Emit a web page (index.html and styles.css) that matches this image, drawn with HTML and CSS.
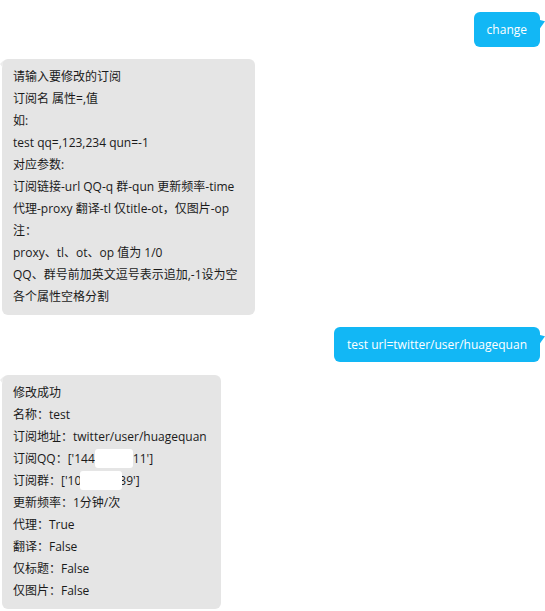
FILE: index.html
```html
<!DOCTYPE html>
<html lang="zh-CN">
<head>
<meta charset="utf-8">
<link rel="stylesheet" href="styles.css">
</head>
<body>
<div class="chat">
  <div class="row right">
    <div class="bubble me">change</div>
  </div>
  <div class="row left">
    <div class="bubble bot wide">
      <div class="line">请输入要修改的订阅</div>
      <div class="line">订阅名 属性=,值</div>
      <div class="line">如:</div>
      <div class="line">test qq=,123,234 qun=-1</div>
      <div class="line">对应参数:</div>
      <div class="line">订阅链接-url QQ-q 群-qun 更新频率-time</div>
      <div class="line">代理-proxy 翻译-tl 仅title-ot，仅图片-op</div>
      <div class="line">注：</div>
      <div class="line">proxy、tl、ot、op 值为 1/0</div>
      <div class="line">QQ、群号前加英文逗号表示追加,-1设为空</div>
      <div class="line">各个属性空格分割</div>
    </div>
  </div>
  <div class="row right">
    <div class="bubble me">test url=twitter/user/huagequan</div>
  </div>
  <div class="row left last">
    <div class="bubble bot">
      <div class="line">修改成功</div>
      <div class="line">名称：test</div>
      <div class="line">订阅地址：twitter/user/huagequan</div>
      <div class="line">订阅QQ：['144<span class="mask m1"></span>11']</div>
      <div class="line">订阅群：['10<span class="mask m2"></span>39']</div>
      <div class="line">更新频率：1分钟/次</div>
      <div class="line">代理：True</div>
      <div class="line">翻译：False</div>
      <div class="line">仅标题：False</div>
      <div class="line">仅图片：False</div>
    </div>
  </div>
</div>
</body>
</html>
```
FILE: styles.css
```css
html, body {
  margin: 0;
  padding: 0;
  background: #ffffff;
}
body {
  font-family: "Open Sans", "Noto Sans CJK SC", sans-serif;
  font-size: 12px;
  color: #1a1a1a;
}
.chat {
  display: flex;
  flex-direction: column;
  gap: 12px;
  padding: 12px 5px 0 2px;
}
.row {
  display: flex;
}
.row.right {
  justify-content: flex-end;
}
.row.left {
  justify-content: flex-start;
}
.row.last {
  margin-top: 1px;
}
.bubble {
  position: relative;
  border-radius: 6px;
  line-height: 22px;
}
.bubble.me {
  background: #12b7f5;
  color: #ffffff;
  padding: 7px 13px 6px 13px;
}
.bubble.me::after {
  content: "";
  position: absolute;
  right: -5px;
  top: 6px;
  border-left: 6px solid #12b7f5;
  border-top: 5px solid transparent;
  border-bottom: 5px solid transparent;
  transform: skewY(-30deg);
}
.bubble.bot {
  background: #e5e5e5;
  padding: 7px 14px 7px 11px;
}
.bubble.bot.wide {
  padding-right: 17px;
}
.bubble.bot::before {
  content: "";
  position: absolute;
  left: -2px;
  top: 2px;
  border-right: 3px solid #ececec;
  border-top: 3px solid transparent;
  border-bottom: 4px solid transparent;
}
.mask {
  display: inline-block;
  position: relative;
  background: #ffffff;
  height: 19px;
  vertical-align: -5px;
  border-radius: 3px;
}
.m1 {
  width: 38px;
  margin-left: 0;
  margin-right: 0;
}
.m2 {
  width: 42px;
  margin-left: -1px;
  margin-right: -3px;
}
```
